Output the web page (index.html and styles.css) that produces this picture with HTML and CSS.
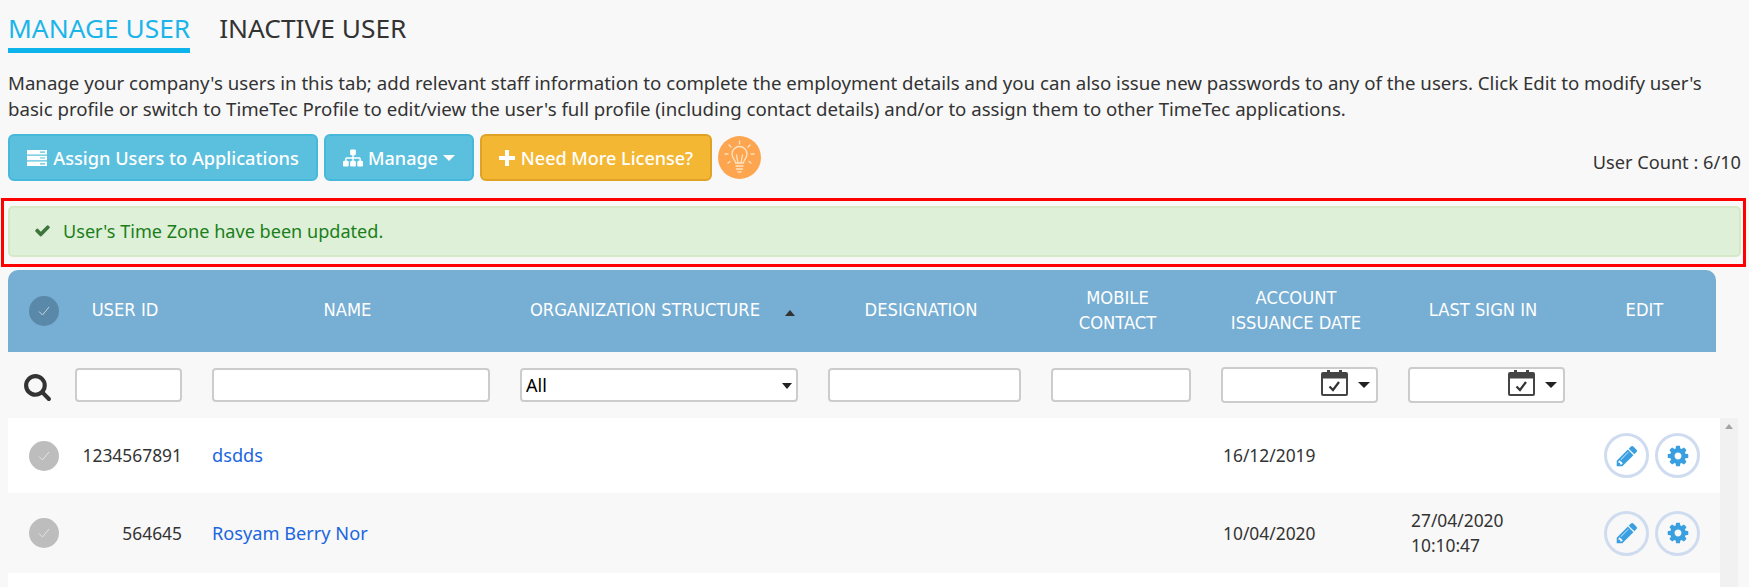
FILE: index.html
```html
<!DOCTYPE html>
<html lang="en">
<head>
    <meta charset="UTF-8">
    <title>Manage User</title>
    <link rel="stylesheet" href="styles.css">
</head>
<body>
<div class="tabs">
    <a class="tab tab-active">MANAGE USER</a>
    <a class="tab">INACTIVE USER</a>
</div>

<p class="intro">Manage your company's users in this tab; add relevant staff information to complete the employment details and you can also issue new passwords to any of the users. Click Edit to modify user's<br>basic profile or switch to TimeTec Profile to edit/view the user's full profile (including contact details) and/or to assign them to other TimeTec applications.</p>

<div class="toolbar">
    <button class="btn btn-info btn-assign">
        <svg class="ico-server" viewBox="0 0 20 16"><path fill="#fff" d="M0 0h20v4.4H0zM0 5.8h20v4.4H0zM0 11.6h20V16H0z"/><path fill="#5bc0de" d="M13 1.6h5v1.2h-5zM13 7.4h5v1.2h-5zM13 13.2h5v1.2h-5z"/></svg>
        Assign Users to Applications
    </button>
    <button class="btn btn-info btn-manage">
        <svg class="ico-sitemap" viewBox="0 0 1792 1792"><path fill="#fff" d="M1792 1248v320q0 40-28 68t-68 28h-320q-40 0-68-28t-28-68v-320q0-40 28-68t68-28h96v-192h-512v192h96q40 0 68 28t28 68v320q0 40-28 68t-68 28h-320q-40 0-68-28t-28-68v-320q0-40 28-68t68-28h96v-192h-512v192h96q40 0 68 28t28 68v320q0 40-28 68t-68 28h-320q-40 0-68-28t-28-68v-320q0-40 28-68t68-28h96v-192q0-52 38-90t90-38h512v-192h-96q-40 0-68-28t-28-68v-320q0-40 28-68t68-28h320q40 0 68 28t28 68v320q0 40-28 68t-68 28h-96v192h512q52 0 90 38t38 90v192h96q40 0 68 28t28 68z"/></svg>
        Manage
        <span class="caret caret-white"></span>
    </button>
    <button class="btn btn-warning btn-license">
        <svg class="ico-plus" viewBox="0 0 16 16"><path fill="#fff" d="M6 0h4v6h6v4h-6v6H6v-6H0V6h6z"/></svg>
        Need More License?
    </button>
    <div class="bulb">
        <svg viewBox="0 0 43 43" fill="none" stroke="#ffe3c4" stroke-width="1.3" stroke-linecap="round">
            <path d="M17.500 27c0-3-3.500-4.500-3.500-9a7.500 7.500 0 0 1 15 0c0 4.500-3.500 6-3.500 9z"/>
            <path d="M18 30h7M18.500 33h6M20 36h3M20 27l-1.500-8M23 27l1.500-8"/>
            <path d="M21.500 5v3M11 9l2 2M32 9l-2 2M7 18h3M33 18h3M10 27l2-1.500M33 27l-2-1.500"/>
        </svg>
    </div>
    <div class="user-count">User Count : 6/10</div>
</div>

<div class="highlight">
    <div class="alert">
        <svg class="ico-check" viewBox="0 0 1792 1792"><path fill="#3c763d" d="M1671 566q0 40-28 68l-724 724-136 136q-28 28-68 28t-68-28l-136-136-362-362q-28-28-28-68t28-68l136-136q28-28 68-28t68 28l294 295 656-657q28-28 68-28t68 28l136 136q28 28 28 68z"/></svg>
        User's Time Zone have been updated.
    </div>
</div>

<div class="grid-row table-head">
    <div class="cell-check"><span class="tick tick-head"><svg viewBox="0 0 30 30"><path d="M10 15.500l3.500 3.500 6.500-8" fill="none" stroke="#c5d6e2" stroke-width="1"/></svg></span></div>
    <div class="th">USER ID</div>
    <div class="th">NAME</div>
    <div class="th th-sorted">ORGANIZATION STRUCTURE<span class="sort-arrow"></span></div>
    <div class="th">DESIGNATION</div>
    <div class="th">MOBILE<br>CONTACT</div>
    <div class="th">ACCOUNT<br>ISSUANCE DATE</div>
    <div class="th">LAST SIGN IN</div>
    <div class="th">EDIT</div>
</div>

<div class="grid-row filters">
    <div class="cell-search">
        <svg viewBox="0 0 1792 1792"><path fill="#333" d="M1216 832q0-185-131.500-316.500t-316.500-131.500-316.500 131.500-131.500 316.500 131.500 316.500 316.500 131.500 316.500-131.500 131.500-316.500zm512 832q0 52-38 90t-90 38q-54 0-90-38l-343-342q-179 124-399 124-143 0-273.500-55.500t-225-150-150-225-55.500-273.500 55.500-273.500 150-225 225-150 273.500-55.500 273.500 55.500 225 150 150 225 55.500 273.500q0 220-124 399l343 343q37 37 37 90z"/></svg>
    </div>
    <div class="filter"><input type="text"></div>
    <div class="filter"><input type="text"></div>
    <div class="filter">
        <div class="select-wrap">
            <select><option>All</option></select>
        </div>
    </div>
    <div class="filter"><input type="text"></div>
    <div class="filter"><input type="text"></div>
    <div class="filter">
        <div class="date-box">
            <svg class="ico-cal" viewBox="0 0 27 27"><path fill="#444" d="M2 3h4V1h3v2h9V1h3v2h4a2 2 0 0 1 2 2v20a2 2 0 0 1-2 2H2a2 2 0 0 1-2-2V5a2 2 0 0 1 2-2z"/><path fill="#fff" d="M2 9.500h23V25H2z"/><path d="M8.500 17.500l3.500 3.500 6-8" fill="none" stroke="#333" stroke-width="2.200"/></svg>
            <span class="caret caret-dark"></span>
        </div>
    </div>
    <div class="filter">
        <div class="date-box">
            <svg class="ico-cal" viewBox="0 0 27 27"><path fill="#444" d="M2 3h4V1h3v2h9V1h3v2h4a2 2 0 0 1 2 2v20a2 2 0 0 1-2 2H2a2 2 0 0 1-2-2V5a2 2 0 0 1 2-2z"/><path fill="#fff" d="M2 9.500h23V25H2z"/><path d="M8.500 17.500l3.500 3.500 6-8" fill="none" stroke="#333" stroke-width="2.200"/></svg>
            <span class="caret caret-dark"></span>
        </div>
    </div>
    <div></div>
</div>

<div class="table-body">
    <div class="rows">
        <div class="grid-row row row-1">
            <div class="cell-check"><span class="tick"><svg viewBox="0 0 30 30"><path d="M10 15.500l3.500 3.500 6.500-8" fill="none" stroke="#e4e4e4" stroke-width="1"/></svg></span></div>
            <div class="td-id">1234567891</div>
            <div class="td-name"><a>dsdds</a></div>
            <div></div>
            <div></div>
            <div></div>
            <div class="td-date">16/12/2019</div>
            <div class="td-sign"></div>
            <div class="td-edit">
                <span class="round-btn"><svg viewBox="0 0 1792 1792"><path d="M491 1536l91-91-235-235-91 91v107h128v128h107zm523-928q0-22-22-22-10 0-17 7l-542 542q-7 7-7 17 0 22 22 22 10 0 17-7l542-542q7-7 7-17zm-54-192l416 416-832 832h-416v-416zm683 96q0 53-37 90l-166 166-416-416 166-165q36-38 90-38 53 0 91 38l235 234q37 39 37 91z"/></svg></span>
                <span class="round-btn"><svg viewBox="0 0 1792 1792"><path d="M1152 896q0-106-75-181t-181-75-181 75-75 181 75 181 181 75 181-75 75-181zm512-109v222q0 12-8 23t-20 13l-185 28q-19 54-39 91 35 50 107 138 10 12 10 25t-9 23q-27 37-99 108t-94 71q-12 0-26-9l-138-108q-44 23-91 38-16 136-29 186-7 28-36 28h-222q-14 0-24.500-8.500t-11.500-21.500l-28-184q-49-16-90-37l-141 107q-10 9-25 9-14 0-25-11-126-114-165-168-7-10-7-23 0-12 8-23 15-21 51-66.500t54-70.500q-27-50-41-99l-183-27q-13-2-21-12.500t-8-23.500v-222q0-12 8-23t19-13l186-28q14-46 39-92-40-57-107-138-10-12-10-24 0-10 9-23 26-36 98.500-107.500t94.500-71.500q13 0 26 10l138 107q44-23 91-38 16-136 29-186 7-28 36-28h222q14 0 24.500 8.500t11.500 21.500l28 184q49 16 90 37l142-107q9-9 24-9 13 0 25 10 129 119 165 170 7 8 7 22 0 12-8 23-15 21-51 66.500t-54 70.500q26 50 41 98l183 28q13 2 21 12.500t8 23.500z"/></svg></span>
            </div>
        </div>
        <div class="grid-row row row-2">
            <div class="cell-check"><span class="tick"><svg viewBox="0 0 30 30"><path d="M10 15.500l3.500 3.500 6.500-8" fill="none" stroke="#e4e4e4" stroke-width="1"/></svg></span></div>
            <div class="td-id">564645</div>
            <div class="td-name"><a>Rosyam Berry Nor</a></div>
            <div></div>
            <div></div>
            <div></div>
            <div class="td-date">10/04/2020</div>
            <div class="td-sign">27/04/2020<br>10:10:47</div>
            <div class="td-edit">
                <span class="round-btn"><svg viewBox="0 0 1792 1792"><path d="M491 1536l91-91-235-235-91 91v107h128v128h107zm523-928q0-22-22-22-10 0-17 7l-542 542q-7 7-7 17 0 22 22 22 10 0 17-7l542-542q7-7 7-17zm-54-192l416 416-832 832h-416v-416zm683 96q0 53-37 90l-166 166-416-416 166-165q36-38 90-38 53 0 91 38l235 234q37 39 37 91z"/></svg></span>
                <span class="round-btn"><svg viewBox="0 0 1792 1792"><path d="M1152 896q0-106-75-181t-181-75-181 75-75 181 75 181 181 75 181-75 75-181zm512-109v222q0 12-8 23t-20 13l-185 28q-19 54-39 91 35 50 107 138 10 12 10 25t-9 23q-27 37-99 108t-94 71q-12 0-26-9l-138-108q-44 23-91 38-16 136-29 186-7 28-36 28h-222q-14 0-24.500-8.500t-11.500-21.500l-28-184q-49-16-90-37l-141 107q-10 9-25 9-14 0-25-11-126-114-165-168-7-10-7-23 0-12 8-23 15-21 51-66.500t54-70.500q-27-50-41-99l-183-27q-13-2-21-12.500t-8-23.500v-222q0-12 8-23t19-13l186-28q14-46 39-92-40-57-107-138-10-12-10-24 0-10 9-23 26-36 98.500-107.500t94.500-71.500q13 0 26 10l138 107q44-23 91-38 16-136 29-186 7-28 36-28h222q14 0 24.500 8.500t11.500 21.500l28 184q49 16 90 37l142-107q9-9 24-9 13 0 25 10 129 119 165 170 7 8 7 22 0 12-8 23-15 21-51 66.500t-54 70.500q26 50 41 98l183 28q13 2 21 12.500t8 23.500z"/></svg></span>
            </div>
        </div>
        <div class="row-3"></div>
    </div>
    <div class="scroll-track"><span class="scroll-up"></span></div>
</div>
</body>
</html>
```

FILE: styles.css
```css
html, body {
    width: 100%;
    height: 587px;
    margin: 0;
    overflow: hidden;
}
body {
    box-sizing: border-box;
    padding: 0 8px;
    background: #f8f8f8;
    color: #333;
    font-family: "Noto Sans", sans-serif;
    font-size: 17.4px;
}

.tabs {
    display: flex;
    gap: 29px;
    height: 53px;
}
.tab {
    box-sizing: border-box;
    height: 53px;
    padding-top: 10px;
    font-size: 26.3px;
    line-height: 36px;
    color: #333;
}
.tab-active {
    color: #1cb5ea;
    border-bottom: 5px solid #0db4ec;
}

.intro {
    margin: 17px 0 0;
    font-size: 18.65px;
    line-height: 25.5px;
    white-space: nowrap;
}

.toolbar {
    display: flex;
    align-items: center;
    margin-top: 13px;
    height: 47px;
}
.btn {
    display: flex;
    align-items: center;
    justify-content: center;
    box-sizing: border-box;
    height: 47px;
    padding: 0;
    border-radius: 6px;
    border: 2px solid;
    color: #fff;
    font-family: inherit;
    font-size: 18px;
    font-weight: 500;
}
.btn-info {
    background: #5bc0de;
    border-color: #46b8da;
}
.btn-warning {
    background: #f4b733;
    border-color: #e0a224;
}
.btn-assign {
    width: 310px;
    gap: 6px;
    font-size: 18.2px;
}
.btn-manage {
    width: 150px;
    margin-left: 6px;
    gap: 5px;
}
.btn-license {
    width: 232px;
    margin-left: 6px;
    gap: 6px;
}
.ico-server {
    width: 20px;
    height: 16px;
}
.ico-sitemap {
    width: 20px;
    height: 20px;
}
.ico-plus {
    width: 16px;
    height: 16px;
}
.caret {
    display: block;
    width: 0;
    height: 0;
    border-left: 6px solid transparent;
    border-right: 6px solid transparent;
}
.caret-white {
    border-top: 6px solid #fff;
}
.caret-dark {
    border-top: 6px solid #222;
}
.bulb {
    width: 43px;
    height: 43px;
    margin-left: 6px;
    border-radius: 50%;
    background: #fda64f;
}
.bulb svg {
    display: block;
}
.user-count {
    margin-left: auto;
    margin-top: 9px;
    font-size: 18.2px;
}

.highlight {
    box-sizing: border-box;
    height: 69px;
    margin: 17px -5px 0 -7px;
    padding: 5px 2px 7px 4px;
    border: 3px solid #f00;
}
.alert {
    display: flex;
    align-items: center;
    gap: 12px;
    box-sizing: border-box;
    height: 51px;
    padding-left: 24px;
    padding-bottom: 2px;
    background: #dff0d8;
    border: 2px solid #d6e9c6;
    border-radius: 5px;
    color: #1a7f1a;
    font-size: 18.1px;
}
.ico-check {
    width: 17px;
    height: 17px;
}

.grid-row {
    display: grid;
    grid-template-columns: 52px 137px 308px 308px 223px 170px 187px 187px 136px;
    align-items: center;
}
.table-head {
    width: 1708px;
    height: 82px;
    margin-top: 3px;
    background: #77aed3;
    border-radius: 10px 10px 0 0;
    color: #fff;
}
.cell-check {
    padding-left: 21px;
}
.tick {
    display: block;
    width: 30px;
    height: 30px;
    border-radius: 50%;
    background: #bdbdbd;
}
.tick svg {
    display: block;
}
.tick-head {
    background: #5a88a8;
}
.th {
    padding: 0 7px 3px 0;
    text-align: center;
    font-family: "Liberation Sans Narrow", "DejaVu Sans Condensed", sans-serif;
    font-size: 18.2px;
    line-height: 25px;
}
.th-sorted {
    display: flex;
    align-items: center;
    justify-content: center;
    padding: 0 0 3px 7px;
}
.sort-arrow {
    margin-left: 25px;
    margin-top: 7px;
    width: 0;
    height: 0;
    border-left: 5px solid transparent;
    border-right: 5px solid transparent;
    border-bottom: 6px solid #333;
}

.filters {
    width: 1708px;
    height: 66px;
}
.cell-search {
    padding-left: 15px;
    padding-top: 3px;
}
.cell-search svg {
    display: block;
    width: 29px;
    height: 29px;
}
.filter {
    padding: 0 15px;
}
.filter input,
.filter select {
    display: block;
    box-sizing: border-box;
    width: 100%;
    height: 34px;
    border: 2px solid #ccc;
    border-radius: 4px;
    background: #fff;
    outline: none;
}
.select-wrap {
    position: relative;
}
.select-wrap select {
    appearance: none;
    padding: 0 4px;
    color: #000;
    font-family: inherit;
    font-size: 18px;
}
.select-wrap::after {
    content: "";
    position: absolute;
    top: 15px;
    right: 6px;
    border-left: 5px solid transparent;
    border-right: 5px solid transparent;
    border-top: 6px solid #222;
}
.date-box {
    display: flex;
    align-items: center;
    justify-content: flex-end;
    gap: 10px;
    box-sizing: border-box;
    height: 36px;
    padding-right: 6px;
    background: #fff;
    border: 2px solid #ccc;
    border-radius: 4px;
}
.ico-cal {
    width: 27px;
    height: 27px;
    margin-top: -5px;
    flex-shrink: 0;
}

.table-body {
    display: flex;
    height: 169px;
    overflow: hidden;
}
.rows {
    width: 1712px;
}
.row {
    width: 1712px;
}
.row-1 {
    height: 75px;
    background: #fff;
}
.row-2 {
    height: 80px;
    background: #f8f8f8;
}
.row-3 {
    height: 14px;
    background: #fff;
}
.td-id {
    padding-right: 15px;
    padding-bottom: 1px;
    text-align: right;
}
.td-name {
    padding-left: 15px;
    padding-bottom: 1px;
    font-size: 18.2px;
}
.td-name a {
    color: #1a66e0;
}
.td-date {
    padding-left: 17px;
    padding-bottom: 1px;
}
.td-sign {
    padding-left: 18px;
    padding-bottom: 1px;
    line-height: 25px;
}
.td-edit {
    display: flex;
    gap: 6px;
    padding-left: 24px;
}
.round-btn {
    display: flex;
    align-items: center;
    justify-content: center;
    box-sizing: border-box;
    width: 45px;
    height: 45px;
    border: 3px solid #cfdcf0;
    border-radius: 50%;
}
.round-btn svg {
    width: 24px;
    height: 24px;
    fill: #3a9fe0;
}
.scroll-track {
    width: 18px;
    background: #f1f1f1;
}
.scroll-up {
    display: block;
    width: 0;
    margin: 6px auto 0;
    border-left: 4px solid transparent;
    border-right: 4px solid transparent;
    border-bottom: 5px solid #a3a3a3;
}
```
